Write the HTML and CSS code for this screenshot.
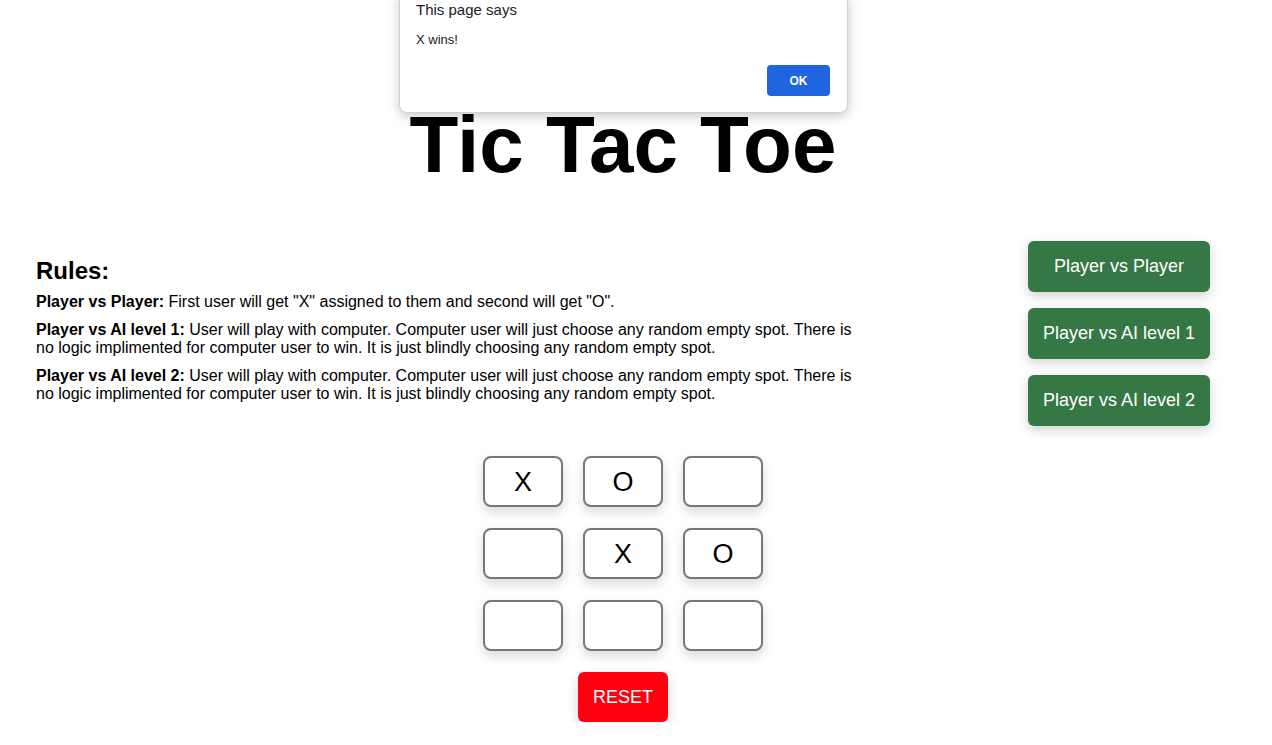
FILE: index.html
```html
<!DOCTYPE html>
<html>
<head>
<meta charset="utf-8">
<title>Tic Tac Toe</title>
<link rel="stylesheet" href="styles.css">
</head>
<body>
<div class="page">
  <h1 class="title">Tic Tac Toe</h1>
  <div class="top-row">
    <section class="rules">
      <h2 class="rules-heading">Rules:</h2>
      <p class="rule"><b>Player vs Player:</b> First user will get "X" assigned to them and second will get "O".</p>
      <p class="rule"><b>Player vs AI level 1:</b> User will play with computer. Computer user will just choose any random empty spot. There is no logic implimented for computer user to win. It is just blindly choosing any random empty spot.</p>
      <p class="rule"><b>Player vs AI level 2:</b> User will play with computer. Computer user will just choose any random empty spot. There is no logic implimented for computer user to win. It is just blindly choosing any random empty spot.</p>
    </section>
    <div class="modes">
      <button class="mode-btn">Player vs Player</button>
      <button class="mode-btn">Player vs AI level 1</button>
      <button class="mode-btn">Player vs AI level 2</button>
    </div>
  </div>
  <div class="board">
    <button class="cell">X</button>
    <button class="cell">O</button>
    <button class="cell"></button>
    <button class="cell"></button>
    <button class="cell">X</button>
    <button class="cell">O</button>
    <button class="cell"></button>
    <button class="cell"></button>
    <button class="cell"></button>
  </div>
  <div class="reset-row">
    <button class="reset-btn">RESET</button>
  </div>
</div>
<div class="alert">
  <div class="alert-title">This page says</div>
  <div class="alert-msg">X wins!</div>
  <div class="alert-actions"><button class="alert-ok">OK</button></div>
</div>
</body>
</html>
```
FILE: styles.css
```css
html, body {
  margin: 0;
  padding: 0;
  background: #ffffff;
}
body {
  font-family: "Liberation Sans", Arial, Helvetica, sans-serif;
  color: #000;
  overflow: hidden;
}
.page {
  width: 1246px;
  position: relative;
}
.title {
  margin: 105px 0 0;
  font-size: 80px;
  line-height: 80px;
  font-weight: bold;
  text-align: center;
}
.top-row {
  margin-top: 56px;
  padding: 0 36px;
  display: flex;
  justify-content: space-between;
  align-items: flex-start;
}
.rules {
  width: 824px;
  padding-top: 16px;
}
.rules-heading {
  margin: 0;
  font-size: 24px;
  line-height: 28px;
  font-weight: bold;
}
.rule {
  margin: 8px 0 0;
  font-size: 16px;
  line-height: 18px;
}
.rule + .rule {
  margin-top: 10px;
}
.modes {
  display: flex;
  flex-direction: column;
  gap: 16px;
}
.mode-btn {
  height: 51px;
  padding: 0 15px;
  border: none;
  border-radius: 6px;
  background: #367845;
  color: #fff;
  font-family: "Liberation Sans", Arial, Helvetica, sans-serif;
  font-size: 18px;
  box-shadow: 0 4px 12px rgba(0, 0, 0, 0.18);
}
.board {
  margin: 30px auto 0;
  width: 280px;
  display: grid;
  grid-template-columns: repeat(3, 80px);
  grid-auto-rows: 51px;
  column-gap: 20px;
  row-gap: 21px;
}
.cell {
  box-sizing: border-box;
  width: 80px;
  height: 51px;
  border: 2px solid #777;
  border-radius: 8px;
  background: #fff;
  font-family: "Liberation Sans", Arial, Helvetica, sans-serif;
  font-size: 27px;
  line-height: 1;
  color: #000;
  padding: 1px 0 0;
  box-shadow: 0 5px 12px rgba(0, 0, 0, 0.15);
}
.reset-row {
  display: flex;
  justify-content: center;
  margin-top: 21px;
}
.reset-btn {
  width: 90px;
  height: 50px;
  border: none;
  border-radius: 6px;
  background: #ff0010;
  color: #fff;
  font-family: "Liberation Sans", Arial, Helvetica, sans-serif;
  font-size: 18px;
  padding: 0;
  box-shadow: 0 5px 12px rgba(0, 0, 0, 0.18);
}
.alert {
  position: absolute;
  left: 399px;
  top: -10px;
  width: 449px;
  box-sizing: border-box;
  padding: 10px 17px 16px 16px;
  background: #fff;
  border: 1px solid #d0d0d0;
  border-radius: 8px;
  box-shadow: 0 3px 12px rgba(0, 0, 0, 0.22);
  font-family: "Liberation Sans", Arial, Helvetica, sans-serif;
  color: #202124;
}
.alert-title {
  font-size: 15px;
  line-height: 18px;
}
.alert-msg {
  margin-top: 13px;
  font-size: 13px;
  line-height: 16px;
}
.alert-actions {
  margin-top: 17px;
  display: flex;
  justify-content: flex-end;
}
.alert-ok {
  width: 63px;
  height: 31px;
  border: none;
  border-radius: 4px;
  background: #1f65e0;
  color: #fff;
  font-family: "Liberation Sans", Arial, Helvetica, sans-serif;
  font-size: 12px;
  font-weight: bold;
  padding: 0;
}
```
